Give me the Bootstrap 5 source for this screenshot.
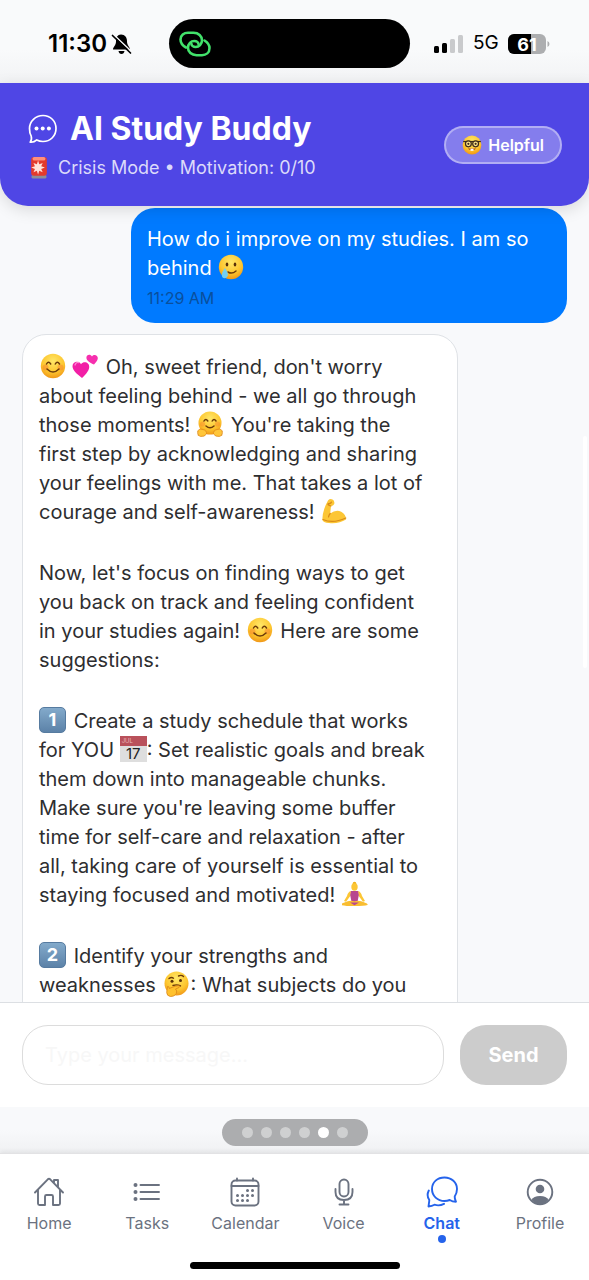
<!DOCTYPE html>
<html lang="en">
<head>
<meta charset="utf-8">
<meta name="viewport" content="width=device-width, initial-scale=1">
<title>AI Study Buddy</title>
<link href="https://cdn.jsdelivr.net/npm/bootstrap@5.3.0/dist/css/bootstrap.min.css" rel="stylesheet">
<style>
  body { font-family: Inter, "Liberation Sans", sans-serif; background: #f8f9fb; color: #2e2e30; }
  .app { height: 100vh; }
  .statusbar { height: 83px; background: linear-gradient(#f9fafb 60%, #f2f3f5); color: #000; }
  .clock { width: 169px; font-size: 24px; font-weight: 600; padding-left: 48px; }
  .island { width: 241px; height: 49px; background: #000; padding-left: 10px; }
  .net { padding-left: 23px; gap: 9px; font-size: 19px; }
  .app-head { background: #4f46e5; color: #fff; padding: 26px 27px; border-radius: 0 0 28px 28px; box-shadow: 0 4px 16px rgba(0,0,0,.13); z-index: 2; }
  .app-head h1 { font-size: 32px; line-height: 40px; font-weight: 700; gap: 12px; }
  .mood-line { font-size: 18px; line-height: 24px; margin-top: 7px; color: #dcdafa; gap: 8px; padding-left: 1px; }
  .tone-btn { height: 38px; padding: 0 16px; font-size: 16px; font-weight: 600; color: #fff; background: rgba(255,255,255,.3); border: 2px solid rgba(255,255,255,.38); gap: 6px; line-height: 20px; }
  .chat { padding: 2px 22px 0; overflow-y: auto; scrollbar-width: none; min-height: 0; gap: 11px; }
  .chat::-webkit-scrollbar { display: none; }
  .bubble { width: 80%; border-radius: 24px; font-size: 20px; line-height: 29px; flex-shrink: 0; }
  .bubble-me { background: #007aff; color: #fff; padding: 17px 16px 15px; }
  .bubble-ai { background: #fff; border: 1px solid #dfe2e6; padding: 18px 16px; }
  .bubble p { margin: 0 0 32px; }
  .bubble-me p { margin: 0; }
  .bubble time { display: block; font-size: 16px; line-height: 20px; margin-top: 5px; color: #0a4f9c; }
  .em { width: 26px; height: 26px; vertical-align: -5px; margin: 0 2px 0 1px; }
  .keycap, .cal-tile { display: inline-block; width: 27px; height: 26px; text-align: center; vertical-align: -5px; overflow: hidden; margin-right: 2px; }
  .keycap { border-radius: 5px; background: linear-gradient(#83aacb, #5c82a8); border: 1px solid #567ba0; color: #fff; font-size: 18px; line-height: 24px; font-weight: 700; }
  .cal-tile { background: linear-gradient(#b9515b 10px, #dedede 10px); font-size: 15px; line-height: 17px; color: #222; margin: 0; }
  .cal-tile small { display: block; font-size: 6px; line-height: 9px; color: #e9b6ba; text-align: left; padding-left: 2px; }
  .scroll-thumb { right: 2px; top: 436px; width: 4px; height: 232px; background: #fff; z-index: 1; }
  .composer { background: #fff; border-top: 1px solid #dcdfe3; padding: 22px; gap: 16px; z-index: 1; }
  .composer input { height: 60px; border: 1px solid #dcdcdc; border-radius: 26px; padding: 0 22px; font-size: 20px; background: #fff; }
  .composer input::placeholder { color: #f7f7f7; opacity: 1; }
  .send-btn { width: 107px; height: 60px; border-radius: 26px; background: #ccc; color: #fff; font-size: 20px; font-weight: 700; }
  .pager { height: 46px; background: linear-gradient(#f8f9fb 50%, #f0f1f3); }
  .pager-pill { background: #acadaf; height: 27px; padding: 0 20px; gap: 8px; }
  .pager-pill i { width: 11px; height: 11px; background: #cfd0d1; border-radius: 50%; }
  .pager-pill i.on { background: #fff; }
  .tabs { background: #fff; border-top: 1px solid #e2e2e4; box-shadow: 0 -2px 4px rgba(0,0,0,.06); height: 127px; padding-top: 22px; z-index: 1; }
  .tabs a { color: #6b7280; font-size: 16px; line-height: 20px; gap: 5px; }
  .tabs a.active { color: #2563eb; font-weight: 600; }
  .tabs a.active::after { content: ""; width: 8px; height: 8px; border-radius: 50%; background: #2563eb; margin-top: -3px; }
  .home-bar { width: 210px; height: 7px; background: #000; margin-bottom: 11px; }
</style>
</head>
<body>
<svg class="position-absolute" width="0" height="0" aria-hidden="true">
  <defs>
    <radialGradient id="face" cx=".5" cy=".3" r=".75"><stop offset="0" stop-color="#ffe768"/><stop offset=".6" stop-color="#fdc62f"/><stop offset="1" stop-color="#ee8f14"/></radialGradient>
  </defs>
  <symbol id="e-blush" viewBox="0 0 26 26"><circle cx="13" cy="13" r="12.2" fill="url(#face)"/><circle cx="5.500" cy="14.500" r="3" fill="#f77b2e" opacity=".45"/><circle cx="20.500" cy="14.500" r="3" fill="#f77b2e" opacity=".45"/><path d="M6.500 11q2-3.600 4.200 0M15.300 11q2-3.600 4.200 0M7 16q6 6 12 0" fill="none" stroke="#6b3a0a" stroke-width="1.500" stroke-linecap="round"/></symbol>
  <symbol id="e-hearts" viewBox="0 0 26 26"><path d="M10 25C5 21 .5 17.500.5 13.200c0-4.600 6-6 8.500-2 3-3.700 8.800-1.400 8.200 3.200C16.700 18.500 13 22 10 25z" fill="#f21fa6"/><path d="M22 11.500c-3.600-1.700-7.500-3.600-7.600-6.800C14.300 1.300 18.500.5 20 3.500c2-2.800 6-1.200 5.800 1.800-.1 2.300-2.100 4.200-3.800 6.200z" fill="#f62fae"/><path d="M3 12q1-3 3.500-2.500" stroke="#ff8ad4" stroke-width="1.300" fill="none" stroke-linecap="round"/></symbol>
  <symbol id="e-hug" viewBox="0 0 26 26"><circle cx="13" cy="12" r="11.500" fill="url(#face)"/><circle cx="5.500" cy="13" r="2.600" fill="#f77b2e" opacity=".4"/><circle cx="20.500" cy="13" r="2.600" fill="#f77b2e" opacity=".4"/><path d="M7 10q1.800-3.200 3.800 0M15.200 10q1.800-3.200 3.800 0M9 15q4 3.500 8 0" fill="none" stroke="#6b3a0a" stroke-width="1.500" stroke-linecap="round"/><path d="M.5 20l2.500-2 3 .5q4 1 3.500 4.500-2 3-6 2.400L.7 24l1-1L.2 22l1-.8zM25.500 20l-2.500-2-3 .5q-4 1-3.500 4.500 2 3 6 2.400l2.800-1.400-1-1 1.500-1-1-.8z" fill="#ffc63a" stroke="#e08a1a" stroke-width=".8"/></symbol>
  <symbol id="e-arm" viewBox="0 0 26 26"><path d="M7 2.500Q9 .2 11.500 1.500q2.500 1.500 1.700 4.500-.8 2-3.200 2l-.8 7.500q5.800-4.500 11-1.800 5 3 4.800 7.800Q18 26 8 25q-6-.3-6.700-3.200Q1.500 12 7 2.500z" fill="#fcc635"/><path d="M7 5.500q3 .5 3.500-1.500M10 8q-2-.3-3-1.500M9.200 15.500Q7.800 17 7.500 19M2 21.500Q12 26 24.800 20" fill="none" stroke="#d98b18" stroke-width="1.200" stroke-linecap="round"/></symbol>
  <symbol id="e-yoga" viewBox="0 0 26 26"><circle cx="12.500" cy="2.500" r="1.800" fill="#f0b31c"/><ellipse cx="12.500" cy="6" rx="3.200" ry="3.700" fill="#fcc635"/><path d="M9 10q-3 .8-4 5l-3 5 2 .8 4.500-6zM16 10q3 .8 4 5l3 5-2 .8-4.500-6z" fill="#fcc635"/><path d="M9 10h7l.8 4-1.300 7h-6L8.200 14z" fill="#b8478f"/><path d="M12.500 20.200q5-1.500 10 1.300 4 1.300 3 2.500-3 1-13 1t-13-1q-1-1.200 3-2.500 5-2.800 10-1.300z" fill="#f9bd30"/><path d="M8 21.500h9l-4.500 2.800z" fill="#b8478f"/></symbol>
  <symbol id="e-think" viewBox="0 0 26 26"><circle cx="13.500" cy="12.500" r="12" fill="url(#face)"/><path d="M6 7.500q2.500-1.700 4.500-.3M15.500 5q3-1.500 5 .6M10 14.500q4-1.500 7.500.4" fill="none" stroke="#6b3a0a" stroke-width="1.400" stroke-linecap="round"/><circle cx="9" cy="10.300" r="1.500" fill="#593008"/><circle cx="17.500" cy="9.600" r="1.500" fill="#593008"/><path d="M4.500 15.500q1.800-.4 1.800 2l3.700-1.500q6-2 7-.8.3 1.300-4.500 2.800 2 1.700.8 4.500-2 3.500-6 3-3.500-.6-3.600-4z" fill="#ffc12d" stroke="#da8417" stroke-width=".8"/></symbol>
  <symbol id="e-tear" viewBox="0 0 26 26"><circle cx="13" cy="13" r="12.2" fill="url(#face)"/><ellipse cx="9" cy="10.500" rx="1.300" ry="2" fill="#593008"/><ellipse cx="17" cy="10.500" rx="1.300" ry="2" fill="#593008"/><path d="M10 18q4 2.500 8-1" fill="none" stroke="#6b3a0a" stroke-width="1.500" stroke-linecap="round"/><path d="M6.800 14q3.500 4.500 3 7.200-.6 3-3.200 3T3.800 21Q4 18 6.800 14z" fill="#72cff5"/></symbol>
  <symbol id="e-nerd" viewBox="0 0 26 26"><circle cx="13" cy="13" r="12.2" fill="url(#face)"/><path d="M1.500 8.500h23" stroke="#3b2a1a" stroke-width="1.600"/><circle cx="8.300" cy="11.500" r="3.800" fill="#ffe58a" stroke="#3b2a1a" stroke-width="1.600"/><circle cx="17.700" cy="11.500" r="3.800" fill="#ffe58a" stroke="#3b2a1a" stroke-width="1.600"/><circle cx="8.300" cy="11.500" r="1.400" fill="#3b2a1a"/><circle cx="17.700" cy="11.500" r="1.400" fill="#3b2a1a"/><path d="M7.500 17.500q5.500 5.500 11 0z" fill="#a34714"/><path d="M11 17.800h4v2.800h-4z" fill="#fff"/></symbol>
  <symbol id="e-siren" viewBox="0 0 20 26"><rect x="2" y="20.500" width="16" height="4" rx="1.500" fill="#8d8f98"/><rect x="1.500" y="1" width="17" height="20.500" rx="3" fill="#e33a2d"/><rect x="3" y="1" width="14" height="4" rx="2" fill="#ff8f7c"/><path d="M9 5l1.300 4L14 7.500l-1.600 3.500 4 1.500-4 1.500 1.600 3.500-3.700-1.500L9 20l-1.300-4L4 17.500 5.600 14l-4-1.500 4-1.500L4 7.500 7.700 9z" fill="#ffe3da"/></symbol>
</svg>

<div class="app d-flex flex-column overflow-hidden position-relative">
  <div class="statusbar d-flex align-items-center flex-shrink-0 pt-1">
    <div class="clock d-flex align-items-center gap-1 flex-shrink-0">11:30
      <svg width="21" height="22" viewBox="0 0 21 22" aria-label="Silent"><path d="M10 1.500c4 0 6 3 6 7 0 4 3 5.500 3 8H2c0-2.500 3-4 3-8 0-4 1.500-7 5-7zM7.500 18h6q-.5 3-3 3t-3-3z"/><path d="M3 2l17.500 16.500" stroke="#f9fafb" stroke-width="1.500"/><path d="M1.500 2.500l18 17.500" stroke="#000" stroke-width="1.700" stroke-linecap="round"/></svg>
    </div>
    <div class="island rounded-pill d-flex align-items-center flex-shrink-0">
      <svg width="32" height="26" viewBox="0 0 32 26" fill="none" stroke="#42e26b" stroke-width="2.600" stroke-linecap="round" aria-hidden="true"><path d="M7 16.500C3.500 14.500 1.500 11.500 1.500 8.500 1.500 4 5 1.800 9 1.800h5.500c5 0 8.500 3.200 8.500 7.500 0 4-3 6.700-6.300 6.700-2.500 0-4.200-1.500-4.200-3"/><path d="M25.500 9.500c3.200 2 5 4.500 5 7.500 0 4.700-3.500 7.200-7.500 7.200h-5.500c-5 0-8.500-3.200-8.500-7.500 0-4 3-6.700 6.300-6.700 2.500 0 4.200 1.500 4.200 3"/></svg>
    </div>
    <div class="net d-flex align-items-center flex-fill">
      <svg width="31" height="20" viewBox="0 0 31 20" aria-label="Signal"><rect x="1" y="12" width="5" height="7" rx="1.500"/><rect x="9" y="9" width="5" height="10" rx="1.500"/><g fill="#c9cacc"><rect x="17" y="5" width="5" height="14" rx="1.500"/><rect x="25" y="1" width="5" height="18" rx="1.500"/></g></svg>
      <span>5G</span>
      <svg width="42" height="20" viewBox="0 0 42 20" aria-label="Battery"><rect width="38" height="20" rx="6" fill="#adaeb0"/><path d="M6 0h17v20H6a6 6 0 0 1-6-6V6a6 6 0 0 1 6-6z"/><path d="M39.500 7q2 1 2 3t-2 3z" fill="#adaeb0"/><text x="19" y="17" text-anchor="middle" font-size="18" font-weight="700" fill="#fff">61</text></svg>
    </div>
  </div>

  <header class="app-head d-flex justify-content-between align-items-center flex-shrink-0 position-relative">
    <div>
      <h1 class="d-flex align-items-center m-0">
        <svg width="31" height="30" viewBox="-1 0 31 30" fill="none" stroke="#fff" stroke-width="1.700" stroke-linejoin="round" aria-hidden="true"><path d="M15 1.500c7.500 0 13 5.700 13 13s-5.500 13-13 13c-2.500 0-4.500-.6-6.200-1.600C6.500 28 4.500 28.500 2.200 28.200c1.300-1.700 1.700-3.500 1-6C2 20 1.500 17.500 1.500 14.500c0-7.300 6-13 13.500-13z"/><g fill="#fff" stroke="none"><circle cx="8.500" cy="14.500" r="2"/><circle cx="14.700" cy="14.500" r="2"/><circle cx="20.900" cy="14.500" r="2"/></g></svg>
        AI Study Buddy</h1>
      <div class="mood-line d-flex align-items-center"><svg width="22" height="24" role="img" aria-label="Siren"><use href="#e-siren"/></svg><span>Crisis Mode • Motivation: 0/10</span></div>
    </div>
    <button type="button" class="tone-btn btn rounded-pill d-flex align-items-center"><svg width="20" height="20" aria-hidden="true"><use href="#e-nerd"/></svg>Helpful</button>
  </header>

  <main class="chat d-flex flex-column flex-grow-1">
    <article class="bubble bubble-me align-self-end">
      <p>How do i improve on my studies. I am so behind <svg class="em" role="img" aria-label="Smiling with tear"><use href="#e-tear"/></svg></p>
      <time>11:29 AM</time>
    </article>
    <article class="bubble bubble-ai">
      <p><svg class="em" role="img" aria-label="Smile"><use href="#e-blush"/></svg><svg class="em ms-1" role="img" aria-label="Hearts"><use href="#e-hearts"/></svg> Oh, sweet friend, don't worry about feeling behind - we all go through those moments! <svg class="em" role="img" aria-label="Hug"><use href="#e-hug"/></svg> You're taking the<br>first step by acknowledging and sharing<br>your feelings with me. That takes a lot of courage and self-awareness! <svg class="em" role="img" aria-label="Strong"><use href="#e-arm"/></svg></p>
      <p>Now, let's focus on finding ways to get you back on track and feeling confident<br>in your studies again! <svg class="em" role="img" aria-label="Smile"><use href="#e-blush"/></svg> Here are some suggestions:</p>
      <p><span class="keycap">1</span> Create a study schedule that works<br>for YOU <span class="cal-tile"><small>JUL</small>17</span>: Set realistic goals and break them down into manageable chunks. Make sure you're leaving some buffer time for self-care and relaxation - after<br>all, taking care of yourself is essential to staying focused and motivated! <svg class="em" role="img" aria-label="Yoga"><use href="#e-yoga"/></svg></p>
      <p><span class="keycap">2</span> Identify your strengths and weaknesses <svg class="em" role="img" aria-label="Thinking"><use href="#e-think"/></svg>: What subjects do you</p>
    </article>
  </main>
  <div class="scroll-thumb position-absolute rounded-pill"></div>

  <form class="composer d-flex align-items-center flex-shrink-0">
    <input type="text" class="form-control flex-grow-1 w-auto" placeholder="Type your message..." aria-label="Message">
    <button type="button" class="send-btn btn flex-shrink-0">Send</button>
  </form>

  <div class="pager d-flex align-items-center justify-content-center flex-shrink-0 pt-1">
    <div class="pager-pill rounded-pill d-flex align-items-center"><i></i><i></i><i></i><i></i><i class="on"></i><i></i></div>
  </div>

  <nav class="tabs d-flex flex-column flex-shrink-0">
    <div class="d-flex flex-grow-1">
      <a href="#" class="w-100 d-flex flex-column align-items-center text-decoration-none"><svg width="32" height="32" viewBox="0 0 32 32" fill="none" stroke="currentColor" stroke-width="1.900" stroke-linejoin="round" stroke-linecap="round"><path d="M2 16.500L14.800 3.300q1.200-1.100 2.400 0L30 16.500M5 14v13.500q0 1.500 1.500 1.500H12V20.500q0-1.500 1.500-1.500h5q1.500 0 1.500 1.500V29h5.500q1.500 0 1.500-1.500V14M21 6.500V4h4v7"/></svg>Home</a>
      <a href="#" class="w-100 d-flex flex-column align-items-center text-decoration-none"><svg width="32" height="32" viewBox="0 0 32 32" fill="none" stroke="currentColor" stroke-width="1.900" stroke-linecap="round"><path d="M9.500 9H28M9.500 16H28M9.500 23H28"/><g fill="currentColor" stroke="none"><circle cx="4.500" cy="9" r="2"/><circle cx="4.500" cy="16" r="2"/><circle cx="4.500" cy="23" r="2"/></g></svg>Tasks</a>
      <a href="#" class="w-100 d-flex flex-column align-items-center text-decoration-none"><svg width="32" height="32" viewBox="0 0 32 32" fill="none" stroke="currentColor" stroke-width="1.900" stroke-linecap="round"><rect x="2.500" y="4.500" width="27" height="25" rx="4"/><path d="M2.500 10h27M8 2.500v2M24 2.500v2"/><g stroke-width="3"><path d="M18.500 14.500h.01M23.500 14.500h.01M8.500 19.500h.01M13.500 19.500h.01M18.500 19.500h.01M23.500 19.500h.01M8.500 24.500h.01M13.500 24.500h.01M18.500 24.500h.01"/></g></svg>Calendar</a>
      <a href="#" class="w-100 d-flex flex-column align-items-center text-decoration-none"><svg width="32" height="32" viewBox="0 0 32 32" fill="none" stroke="currentColor" stroke-width="1.900" stroke-linecap="round"><rect x="11.500" y="3.500" width="9" height="17" rx="4.500"/><path d="M7.500 13v3q0 8 8.500 8t8.500-8v-3M16 24v4.500M11.500 28.500h9"/></svg>Voice</a>
      <a href="#" class="active w-100 d-flex flex-column align-items-center text-decoration-none" aria-current="page"><svg width="32" height="32" viewBox="0 0 32 32" fill="none" stroke="currentColor" stroke-width="1.900" stroke-linecap="round" stroke-linejoin="round"><path d="M18.500 1.500C25.500 1.500 31 6.500 31 13c0 3.500-1 5.500-2.300 7.500-.2 1.800.6 3.500 1.300 5.200-2.500 0-4.500-.6-6.300-1.700-1.700.7-3.400 1-5.200 1C11.500 25 6 20 6 13S11.500 1.500 18.500 1.500z"/><path d="M2.800 14.500c-2 4-1.300 7 .5 9.500-.1 2.300-.6 4.500-.8 6.500 2.300-.2 4.300-.8 6-1.800 3.500 1.300 6.800.6 9.500-.9"/></svg>Chat</a>
      <a href="#" class="w-100 d-flex flex-column align-items-center text-decoration-none"><svg width="32" height="32" viewBox="0 0 32 32" fill="none" stroke="currentColor" stroke-width="1.900"><circle cx="16" cy="16" r="12.300"/><circle cx="16" cy="13" r="4.300" fill="currentColor" stroke="none"/><path d="M7.500 24q2-4 8.500-4t8.500 4q-3.500 4.200-8.500 4.200T7.500 24z" fill="currentColor" stroke="none"/></svg>Profile</a>
    </div>
    <div class="home-bar rounded-pill align-self-center"></div>
  </nav>
</div>
<script src="https://cdn.jsdelivr.net/npm/bootstrap@5.3.0/dist/js/bootstrap.bundle.min.js"></script>
</body>
</html>
